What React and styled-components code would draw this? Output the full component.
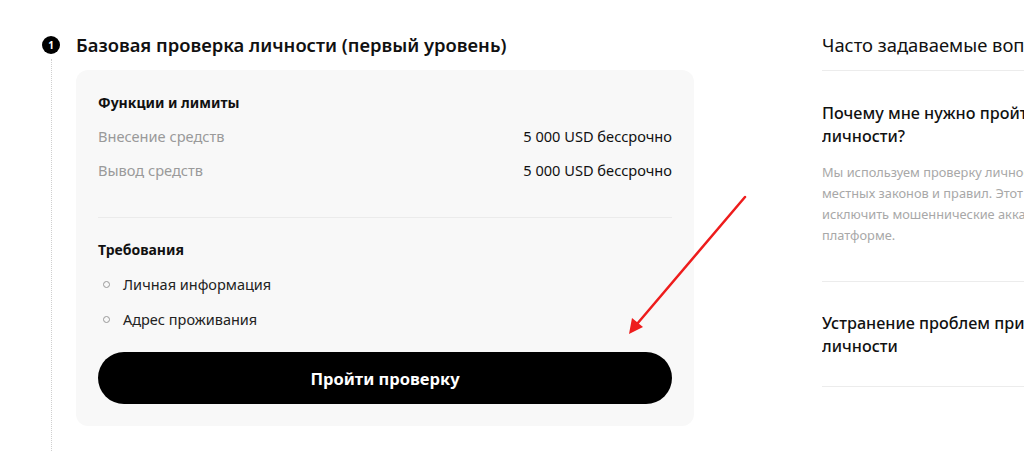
import React from "react";
import styled, { createGlobalStyle } from "styled-components";

const Global = createGlobalStyle`
  html, body { margin: 0; padding: 0; background: #fff; overflow: hidden; }
  body { font-family: "Noto Sans", "Inter", sans-serif; color: #111; }
  * { box-sizing: border-box; }
`;

const Page = styled.div`
  position: relative;
  width: 1024px;
  height: 451px;
  overflow: hidden;
  display: flex;
  align-items: flex-start;
  padding: 36px 0 0 42px;
  gap: 128px;
`;

const Step = styled.section`
  display: grid;
  grid-template-columns: 18px 618px;
  column-gap: 16px;
  grid-template-rows: 18px auto;
  row-gap: 16px;
  align-items: start;
`;

const StepRail = styled.div`
  grid-row: 1 / span 2;
  display: flex;
  flex-direction: column;
  align-items: center;
  height: 415px;
`;

const StepNum = styled.div`
  width: 18px;
  height: 18px;
  border-radius: 50%;
  background: #000;
  color: #fff;
  font-size: 10px;
  font-weight: 700;
  display: flex;
  align-items: center;
  justify-content: center;
  flex-shrink: 0;
`;

const DottedLine = styled.div`
  margin-top: 5px;
  flex: 1;
  border-left: 1px dotted #cfcfcf;
`;

const StepTitle = styled.h2`
  margin: 0;
  font-size: 18.4px;
  line-height: 18px;
  font-weight: 600;
  color: #111;
  white-space: nowrap;
`;

const Card = styled.div`
  background: #f8f8f8;
  border-radius: 12px;
  padding: 22px;
  display: flex;
  flex-direction: column;
`;

const BlockTitle = styled.div`
  font-size: 14px;
  font-weight: 700;
  line-height: 22px;
  margin-top: ${(p) => p.$mt || 0}px;
`;

const Row = styled.div`
  display: flex;
  justify-content: space-between;
  align-items: center;
  height: 22px;
  margin-top: ${(p) => p.$mt}px;
  font-size: 14.6px;
`;

const Label = styled.span`
  color: #9a9a9a;
`;

const Value = styled.span`
  color: #111;
`;

const Divider = styled.hr`
  border: 0;
  border-top: 1px solid #ebebeb;
  margin: ${(p) => p.$mt}px 0 0;
  width: 100%;
`;

const List = styled.ul`
  list-style: none;
  margin: 0;
  padding: 0;
`;

const Item = styled.li`
  display: flex;
  align-items: center;
  height: 22px;
  margin-top: ${(p) => p.$mt}px;
  font-size: 14.5px;
  color: #222;
  &::before {
    content: "";
    width: 5px;
    height: 5px;
    border: 1px solid #999;
    border-radius: 50%;
    margin: 0 13px 0 5px;
  }
`;

const Button = styled.button`
  margin-top: 22px;
  height: 52px;
  width: 100%;
  border: 0;
  border-radius: 26px;
  background: #000;
  color: #fff;
  font-family: inherit;
  font-size: 16.5px;
  font-weight: 700;
  cursor: pointer;
`;

const Faq = styled.aside`
  width: 202px;
  flex-shrink: 0;
  display: flex;
  flex-direction: column;
  overflow: hidden;
`;

const FaqHead = styled.div`
  font-size: 18.4px;
  line-height: 18px;
  color: #111;
  white-space: nowrap;
  padding-bottom: 16px;
  border-bottom: 1px solid #ececec;
`;

const FaqItem = styled.div`
  padding: ${(p) => p.$pt}px 0 ${(p) => p.$pb}px;
  border-bottom: 1px solid #ececec;
`;

const Question = styled.div`
  font-size: 16.2px;
  font-weight: 500;
  line-height: 23px;
  color: #111;
  white-space: nowrap;
`;

const Answer = styled.p`
  margin: 14px 0 0;
  font-size: 12.8px;
  line-height: 21px;
  color: #a8a8a8;
  white-space: nowrap;
`;

const Arrow = styled.svg`
  position: absolute;
  left: 0;
  top: 0;
  pointer-events: none;
`;

export default function App() {
  return (
    <>
      <Global />
      <Page>
        <Step>
          <StepRail>
            <StepNum>1</StepNum>
            <DottedLine />
          </StepRail>
          <StepTitle>Базовая проверка личности (первый уровень)</StepTitle>
          <Card>
            <BlockTitle>Функции и лимиты</BlockTitle>
            <Row $mt={11}>
              <Label>Внесение средств</Label>
              <Value>5 000 USD бессрочно</Value>
            </Row>
            <Row $mt={12}>
              <Label>Вывод средств</Label>
              <Value>5 000 USD бессрочно</Value>
            </Row>
            <Divider $mt={36} />
            <BlockTitle $mt={21}>Требования</BlockTitle>
            <List>
              <Item $mt={12}>Личная информация</Item>
              <Item $mt={13}>Адрес проживания</Item>
            </List>
            <Button>Пройти проверку</Button>
          </Card>
        </Step>
        <Faq>
          <FaqHead>Часто задаваемые вопросы</FaqHead>
          <FaqItem $pt={31} $pb={35}>
            <Question>
              Почему мне нужно пройти проверку
              <br />
              личности?
            </Question>
            <Answer>
              Мы используем проверку личности для соблюдения
              <br />
              местных законов и правил. Этот процесс помогает
              <br />
              исключить мошеннические аккаунты на нашей
              <br />
              платформе.
            </Answer>
          </FaqItem>
          <FaqItem $pt={30} $pb={28}>
            <Question>
              Устранение проблем при проверке
              <br />
              личности
            </Question>
          </FaqItem>
        </Faq>
        <Arrow width="1024" height="451" viewBox="0 0 1024 451">
          <line x1="745" y1="197" x2="637" y2="324" stroke="#ee1c1c" strokeWidth="2.5" strokeLinecap="round" />
          <polygon points="629,334 632,318 643,327" fill="#ee1c1c" />
        </Arrow>
      </Page>
    </>
  );
}
